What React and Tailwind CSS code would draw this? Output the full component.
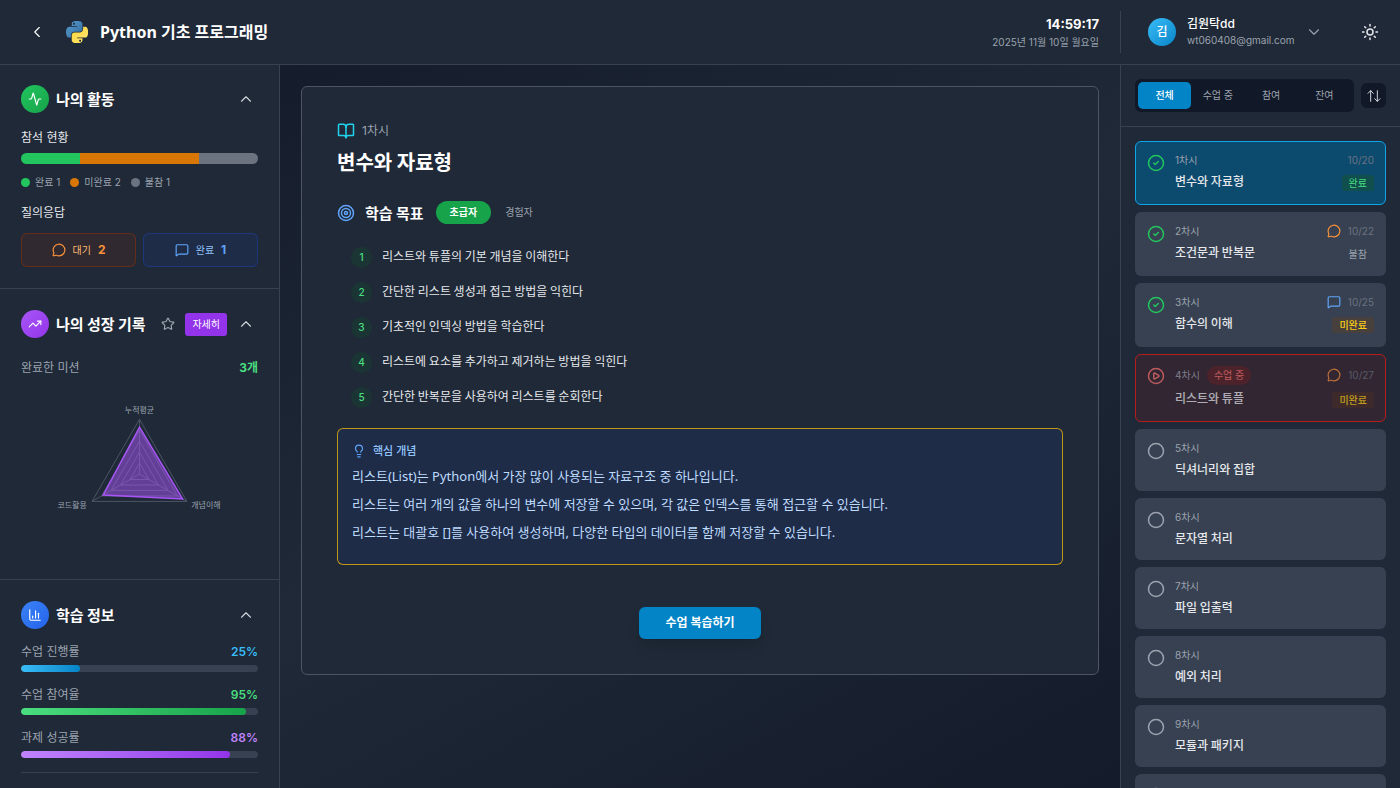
import React, { useState } from "react";
import {
  Activity,
  ArrowUpDown,
  BookOpen,
  ChartColumn,
  ChevronDown,
  ChevronLeft,
  ChevronUp,
  Circle,
  CircleCheck,
  CirclePlay,
  Lightbulb,
  MessageCircle,
  MessageSquare,
  Star,
  Sun,
  Target,
  TrendingUp,
} from "lucide-react";

const lessons = [
  { id: 1, title: "변수와 자료형", date: "10/20", status: "완료" },
  { id: 2, title: "조건문과 반복문", date: "10/22", status: "불참", question: "waiting" },
  { id: 3, title: "함수의 이해", date: "10/25", status: "미완료", question: "answered" },
  { id: 4, title: "리스트와 튜플", date: "10/27", status: "미완료", question: "waiting", live: true },
  { id: 5, title: "딕셔너리와 집합" },
  { id: 6, title: "문자열 처리" },
  { id: 7, title: "파일 입출력" },
  { id: 8, title: "예외 처리" },
  { id: 9, title: "모듈과 패키지" },
  { id: 10, title: "클래스와 객체" },
];

const goals = [
  "리스트와 튜플의 기본 개념을 이해한다",
  "간단한 리스트 생성과 접근 방법을 익힌다",
  "기초적인 인덱싱 방법을 학습한다",
  "리스트에 요소를 추가하고 제거하는 방법을 익힌다",
  "간단한 반복문을 사용하여 리스트를 순회한다",
];

const progress = [
  { label: "수업 진행률", value: 25, text: "text-[#38bdf8]", bar: "from-[#38bdf8] to-[#0284c7]" },
  { label: "수업 참여율", value: 95, text: "text-[#4ade80]", bar: "from-[#4ade80] to-[#16a34a]" },
  { label: "과제 성공률", value: 88, text: "text-[#c084fc]", bar: "from-[#c084fc] to-[#9333ea]" },
];

const attendance = [
  { label: "완료", count: 1, color: "bg-[#22c55e]" },
  { label: "미완료", count: 2, color: "bg-[#d97706]" },
  { label: "불참", count: 1, color: "bg-[#6b7280]" },
];

const statusStyles = {
  완료: "bg-[#14532d]/50 text-[#4ade80]",
  불참: "text-[#9ca3af]",
  미완료: "bg-[#713f12]/30 text-[#facc15] font-medium",
};

const PythonLogo = () => (
  <svg viewBox="0 0 110 110" className="size-[22px]" aria-hidden="true">
    <defs>
      <linearGradient id="pyBlue" x1="0" y1="0" x2="1" y2="1">
        <stop offset="0" stopColor="#5a9fd4" />
        <stop offset="1" stopColor="#306998" />
      </linearGradient>
      <linearGradient id="pyYellow" x1="0" y1="0" x2="1" y2="1">
        <stop offset="0" stopColor="#ffd43b" />
        <stop offset="1" stopColor="#ffe873" />
      </linearGradient>
    </defs>
    <path
      fill="url(#pyBlue)"
      d="M54.9 0c-4.6 0-9 .4-12.8 1.1C30.8 3.1 28.7 7.3 28.7 15v10.2h26.8v3.4H18.7c-7.8 0-14.6 4.7-16.7 13.6-2.500 10.200-2.600 16.600 0 27.200 1.900 7.900 6.500 13.600 14.200 13.600h9.200V70.800c0-8.800 7.600-16.600 16.700-16.600h26.700c7.400 0 13.400-6.100 13.400-13.600V15c0-7.200-6.100-12.700-13.400-13.900C64.200.3 59.500 0 54.900 0zM40.400 8.200c2.800 0 5 2.300 5 5.100s-2.200 5.100-5 5.100-5-2.300-5-5.100 2.200-5.100 5-5.100z"
    />
    <path
      fill="url(#pyYellow)"
      d="M85.6 28.7v11.9c0 9.200-7.800 17-16.700 17H42.100c-7.300 0-13.400 6.300-13.400 13.600v25.500c0 7.300 6.300 11.500 13.400 13.600 8.500 2.500 16.600 2.900 26.800 0 6.700-2 13.400-5.900 13.400-13.600V86.500H55.500v-3.400h40.200c7.800 0 10.700-5.400 13.400-13.600 2.800-8.400 2.700-16.500 0-27.200-1.900-7.800-5.600-13.600-13.400-13.600H85.600zM70.600 93.300c2.800 0 5 2.300 5 5.100s-2.200 5.100-5 5.100-5-2.300-5-5.100 2.200-5.100 5-5.100z"
    />
  </svg>
);

const Header = () => (
  <header className="flex h-[65px] shrink-0 items-center justify-between border-b border-[#374151] bg-[#1f2937] pl-7">
    <div className="flex items-center">
      <button type="button" aria-label="뒤로" className="mr-5 text-white">
        <ChevronLeft className="size-[18px]" strokeWidth={1.5} />
      </button>
      <PythonLogo />
      <h1 className="ml-3 font-[Noto_Sans,Noto_Sans_CJK_KR,sans-serif] text-base font-bold">
        Python 기초 프로그래밍
      </h1>
    </div>
    <div className="flex items-center">
      <div className="text-right">
        <p className="text-[13px] leading-5 font-bold">14:59:17</p>
        <p className="text-[10px] leading-4 text-[#9ca3af]">2025년 11월 10일 월요일</p>
      </div>
      <div className="ml-[21px] flex h-[42px] w-[280px] items-center border-l border-[#374151] pl-[27px]">
        <div className="flex size-7 items-center justify-center rounded-full bg-linear-to-br from-[#38bdf8] to-[#0284c7] text-xs font-medium">
          김
        </div>
        <div className="ml-[11px]">
          <p className="text-xs leading-4 font-medium">김원탁dd</p>
          <p className="text-[10px] leading-4 text-[#9ca3af]">wt060408@gmail.com</p>
        </div>
        <button type="button" aria-label="계정 메뉴" className="ml-2.5 text-[#9ca3af]">
          <ChevronDown className="size-[18px]" strokeWidth={1.5} />
        </button>
        <button type="button" aria-label="테마 변경" className="mr-[21px] ml-auto text-[#e5e7eb]">
          <Sun className="size-[18px]" />
        </button>
      </div>
    </div>
  </header>
);

const SectionHeader = ({ icon: Icon, color, title, children }) => (
  <div className="flex h-7 items-center">
    <span className={`flex size-7 items-center justify-center rounded-full bg-linear-to-br ${color}`}>
      <Icon className="size-[14px]" />
    </span>
    <h2 className="ml-[7px] font-[Noto_Sans_CJK_KR,sans-serif] text-[15px] font-bold">{title}</h2>
    <div className="ml-auto flex items-center">
      {children}
      <button type="button" aria-label={`${title} 접기`} className="p-[3px] text-[#d1d5db]">
        <ChevronUp className="size-[18px]" strokeWidth={1.5} />
      </button>
    </div>
  </div>
);

// angles run clockwise from the top corner
const point = (radius, index) => {
  const angle = (index * 2 * Math.PI) / 3 - Math.PI / 2;
  return [119 + radius * Math.cos(angle), 80 + radius * Math.sin(angle)];
};

const triangle = (radii) => radii.map((r, i) => point(r, i).join(",")).join(" ");

const GrowthChart = () => (
  <svg viewBox="0 0 238 175" className="mt-4 block h-[175px] w-full" role="img" aria-label="성장 기록 차트">
    <g fill="none" stroke="#4b5563" strokeWidth="1">
      {[11, 22, 33, 44, 55].map((r) => (
        <polygon key={r} points={triangle([r, r, r])} />
      ))}
      {[0, 1, 2].map((i) => {
        const [x, y] = point(55, i);
        return <line key={i} x1="119" y1="80" x2={x} y2={y} />;
      })}
    </g>
    <polygon points={triangle([47, 50, 42])} fill="#a855f7" fillOpacity="0.5" stroke="#a855f7" strokeWidth="1.5" />
    <g fill="#9ca3af" fontSize="8">
      <text x="119" y="19" textAnchor="middle">누적평균</text>
      <text x="66" y="114" textAnchor="end">코드활용</text>
      <text x="171" y="114">개념이해</text>
    </g>
  </svg>
);

const LeftSidebar = () => (
  <aside className="w-[280px] shrink-0 overflow-hidden border-r border-[#374151] bg-[#1f2937]">
    {/* My activity */}
    <section className="border-b border-[#374151] px-[21px] pt-5 pb-[21px]">
      <SectionHeader icon={Activity} color="from-[#22c55e] to-[#16a34a]" title="나의 활동" />
      <h3 className="mt-4 text-xs leading-4.5 text-[#e5e7eb]">참석 현황</h3>
      <div className="mt-1.5 flex h-[11px] overflow-hidden rounded-full">
        {attendance.map((item) => (
          <div key={item.label} className={item.color} style={{ flexGrow: item.count }} />
        ))}
      </div>
      <ul className="mt-2.5 flex gap-2.5 text-[10px] leading-4 text-[#9ca3af]">
        {attendance.map((item) => (
          <li key={item.label} className="flex items-center gap-[5px]">
            <span className={`size-[9px] rounded-full ${item.color}`} />
            {item.label} {item.count}
          </li>
        ))}
      </ul>
      <h3 className="mt-3.5 text-xs leading-4.5 text-[#e5e7eb]">질의응답</h3>
      <div className="mt-[11px] grid grid-cols-2 gap-[7px]">
        <button
          type="button"
          className="flex h-[34px] items-center justify-center gap-[7px] rounded-md border border-[#7c2d12]/70 bg-[#7c2d12]/20 text-[#fdba74]"
        >
          <MessageCircle className="size-[14px] text-[#fb923c]" />
          <span className="text-[10px]">대기</span>
          <span className="text-xs font-bold text-[#fb923c]">2</span>
        </button>
        <button
          type="button"
          className="flex h-[34px] items-center justify-center gap-[7px] rounded-md border border-[#1e3a8a]/80 bg-[#1e3a8a]/20 text-[#93c5fd]"
        >
          <MessageSquare className="size-[14px] text-[#60a5fa]" />
          <span className="text-[10px]">완료</span>
          <span className="text-xs font-bold text-[#60a5fa]">1</span>
        </button>
      </div>
    </section>

    {/* Growth record */}
    <section className="border-b border-[#374151] px-[21px] pt-[21px] pb-2.5">
      <SectionHeader icon={TrendingUp} color="from-[#a855f7] to-[#9333ea]" title="나의 성장 기록">
        <button type="button" aria-label="즐겨찾기" className="mr-2.5 text-[#9ca3af]">
          <Star className="size-[14px]" />
        </button>
        <button type="button" className="mr-[7px] h-[23px] rounded-[3px] bg-[#9333ea] px-[7px] text-[10px]">
          자세히
        </button>
      </SectionHeader>
      <div className="mt-5 flex items-center justify-between text-xs leading-5">
        <span className="text-[#9ca3af]">완료한 미션</span>
        <span className="font-bold text-[#4ade80]">3개</span>
      </div>
      <GrowthChart />
    </section>

    {/* Study info */}
    <section className="px-[21px] pt-[21px]">
      <SectionHeader icon={ChartColumn} color="from-[#3b82f6] to-[#2563eb]" title="학습 정보" />
      <div className="mt-3.5 flex flex-col gap-3.5 border-b border-[#374151] pb-3.5">
        {progress.map((item) => (
          <div key={item.label}>
            <div className="flex items-center justify-between text-xs leading-[18px]">
              <span className="text-[#9ca3af]">{item.label}</span>
              <span className={`font-semibold ${item.text}`}>{item.value}%</span>
            </div>
            <div className="mt-1 h-[7px] overflow-hidden rounded-full bg-[#374151]">
              <div
                className={`h-full rounded-full bg-linear-to-r ${item.bar}`}
                style={{ width: `${item.value}%` }}
              />
            </div>
          </div>
        ))}
      </div>
    </section>
  </aside>
);

const LessonContent = () => {
  const [level, setLevel] = useState("초급자");

  return (
    <main className="min-w-0 flex-1 overflow-hidden p-[21px]">
      <article className="rounded-md border border-[#4b5563] bg-[#1f2937] p-[35px]">
        <p className="flex items-center gap-[7px] text-xs leading-[18px] text-[#9ca3af]">
          <BookOpen className="size-[18px] text-[#22d3ee]" />
          1차시
        </p>
        <h2 className="mt-2 font-[Noto_Sans_CJK_KR,sans-serif] text-xl leading-7 font-bold">변수와 자료형</h2>

        <div className="mt-[25px] flex items-center">
          <Target className="size-[18px] text-[#60a5fa]" />
          <h3 className="ml-2.5 font-[Noto_Sans_CJK_KR,sans-serif] text-[15px] leading-[22px] font-bold">
            학습 목표
          </h3>
          <div className="ml-3 flex text-[10px]">
            {["초급자", "경험자"].map((name) => (
              <button
                key={name}
                type="button"
                onClick={() => setLevel(name)}
                className={
                  level === name
                    ? "h-[23px] rounded-full bg-[#16a34a] px-3.5 font-bold"
                    : "h-[23px] rounded-full px-3.5 text-[#9ca3af]"
                }
              >
                {name}
              </button>
            ))}
          </div>
        </div>

        <ol className="mt-[21px] flex flex-col gap-3.5 pl-3.5">
          {goals.map((goal, index) => (
            <li key={goal} className="flex h-[21px] items-start gap-2.5 text-xs">
              <span className="mt-0.5 flex size-[21px] shrink-0 items-center justify-center rounded-full bg-[#14532d]/30 text-[10px] font-medium text-[#4ade80]">
                {index + 1}
              </span>
              <span className="font-[Noto_Sans_CJK_KR,sans-serif] leading-[21px] text-[#e5e7eb]">{goal}</span>
            </li>
          ))}
        </ol>

        <section className="mt-[22px] rounded-md border border-[#eab308]/80 bg-[#1e3a8a]/20 px-3.5 pt-3.5 pb-[18px]">
          <h4 className="flex items-center gap-[7px] text-[11px] leading-4 font-medium text-[#93c5fd]">
            <Lightbulb className="size-[14px] text-[#60a5fa]" />
            핵심 개념
          </h4>
          <div className="mt-[3px] font-[Noto_Sans,Noto_Sans_CJK_KR,sans-serif] text-[13px] leading-7 text-[#bfdbfe]">
            <p>리스트(List)는 Python에서 가장 많이 사용되는 자료구조 중 하나입니다.</p>
            <p>리스트는 여러 개의 값을 하나의 변수에 저장할 수 있으며, 각 값은 인덱스를 통해 접근할 수 있습니다.</p>
            <p>리스트는 대괄호 []를 사용하여 생성하며, 다양한 타입의 데이터를 함께 저장할 수 있습니다.</p>
          </div>
        </section>

        <div className="mt-[42px] flex justify-center">
          <button type="button" className="h-8 rounded-md bg-[#0284c7] px-[26px] text-xs font-bold shadow-lg">
            수업 복습하기
          </button>
        </div>
      </article>
    </main>
  );
};

const LessonIcon = ({ lesson }) => {
  if (lesson.live) return <CirclePlay className="mt-0.5 size-[18px] shrink-0 text-[#f87171]" />;
  if (lesson.status) return <CircleCheck className="mt-0.5 size-[18px] shrink-0 text-[#22c55e]" />;
  return <Circle className="mt-0.5 size-[18px] shrink-0 text-[#9ca3af]" />;
};

const LessonCard = ({ lesson, selected, onSelect }) => {
  const rowHeight = lesson.live ? "h-5" : "h-4";
  let frame = "border-transparent bg-[#374151]";
  if (selected) frame = "border-[#0ea5e9] bg-[#0c4a6e]";
  if (lesson.live) frame = "border-[#b91c1c] bg-[#7f1d1d]/20";

  return (
    <button
      type="button"
      onClick={onSelect}
      className={`flex w-full shrink-0 items-start rounded-md border px-[11px] pt-2.5 text-left ${
        lesson.live ? "h-17" : lesson.status ? "h-16" : "h-[62px]"
      } ${frame}`}
    >
      <span className={`flex w-full items-start ${lesson.live ? "opacity-70" : ""}`}>
        <LessonIcon lesson={lesson} />
        <span className="ml-2.5 flex-1">
          <span className={`flex items-center text-[10px] text-[#9ca3af] ${rowHeight}`}>
            {lesson.id}차시
            {lesson.live && (
              <span className="ml-[7px] rounded-full bg-[#7f1d1d]/50 px-[7px] leading-[19px] text-[#f87171]">
                수업 중
              </span>
            )}
          </span>
          <span className="mt-[3px] block font-[Noto_Sans_CJK_KR,sans-serif] text-xs leading-5 font-medium text-[#e5e7eb]">
            {lesson.title}
          </span>
        </span>
        {lesson.status && (
          <span className="flex flex-col items-end">
            <span className={`flex items-center gap-[7px] text-[10px] text-[#6b7280] ${rowHeight}`}>
              {lesson.question === "waiting" && <MessageCircle className="size-[14px] text-[#fb923c]" />}
              {lesson.question === "answered" && <MessageSquare className="size-[14px] text-[#60a5fa]" />}
              {lesson.date}
            </span>
            <span className={`mt-[7px] rounded-[3px] px-[7px] text-[10px] leading-4 ${statusStyles[lesson.status]}`}>
              {lesson.status}
            </span>
          </span>
        )}
      </span>
    </button>
  );
};

const RightSidebar = () => {
  const [filter, setFilter] = useState("전체");
  const [selected, setSelected] = useState(1);

  return (
    <aside className="flex w-[280px] shrink-0 flex-col overflow-hidden border-l border-[#374151] bg-[#1f2937]">
      <div className="flex h-[62px] shrink-0 items-center gap-[7px] border-b border-[#374151] px-3.5">
        <div className="grid h-[33px] flex-1 grid-cols-4 rounded-md bg-[#111827] p-[3px] text-[10px]">
          {["전체", "수업 중", "참여", "잔여"].map((name) => (
            <button
              key={name}
              type="button"
              onClick={() => setFilter(name)}
              className={
                filter === name ? "rounded-[5px] bg-[#0284c7] font-medium" : "rounded-[5px] text-[#9ca3af]"
              }
            >
              {name}
            </button>
          ))}
        </div>
        <button
          type="button"
          aria-label="정렬"
          className="flex size-[25px] items-center justify-center rounded-md bg-[#111827] text-[#d1d5db]"
        >
          <ArrowUpDown className="size-4" strokeWidth={1.5} />
        </button>
      </div>
      <div className="flex flex-1 flex-col gap-[7px] overflow-hidden p-3.5">
        {lessons.map((lesson) => (
          <LessonCard
            key={lesson.id}
            lesson={lesson}
            selected={selected === lesson.id}
            onSelect={() => setSelected(lesson.id)}
          />
        ))}
      </div>
    </aside>
  );
};

const App = () => (
  <div className="flex h-screen flex-col bg-linear-to-br from-[#111827] via-[#1f2937] to-[#111827] font-[Inter,Noto_Sans_CJK_KR,sans-serif] text-white">
    <Header />
    <div className="flex min-h-0 flex-1">
      <LeftSidebar />
      <LessonContent />
      <RightSidebar />
    </div>
  </div>
);

export default App;
